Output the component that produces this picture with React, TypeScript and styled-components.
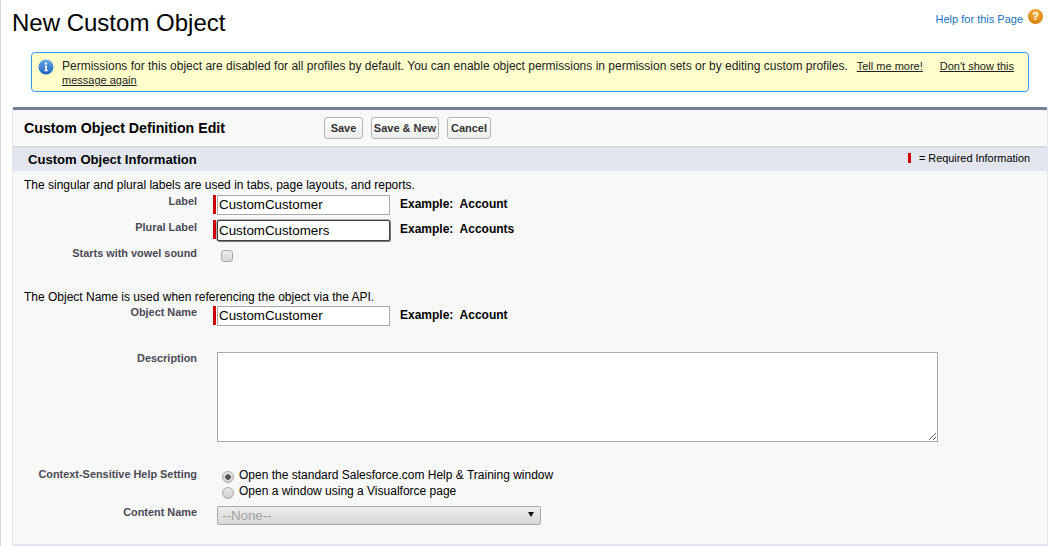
import React from 'react';
import styled, { createGlobalStyle } from 'styled-components';

const GlobalStyle = createGlobalStyle`
  html, body {
    margin: 0;
    padding: 0;
    background: #fff;
  }
  body {
    color: #000;
    font-family: "Liberation Sans", Arial, sans-serif;
    font-size: 12px;
    overflow: hidden;
  }
`;

const App: React.FC = () => (
  <>
    <GlobalStyle />
    <SPage>
      <SHeader>
        <STitle>New Custom Object</STitle>
        <SHelpLink>
          <SHelpText>Help for this Page</SHelpText>
          <SHelpIcon>?</SHelpIcon>
        </SHelpLink>
      </SHeader>

      <SMessage>
        <SInfoIcon>
          <svg width="16" height="16" viewBox="0 0 16 16">
            <defs>
              <linearGradient id="info-blue" x1="0" y1="0" x2="0" y2="1">
                <stop offset="0" stopColor="#6aa9ec" />
                <stop offset="1" stopColor="#1a5fc0" />
              </linearGradient>
            </defs>
            <circle cx="8" cy="8" r="7.5" fill="url(#info-blue)" />
            <circle cx="8" cy="4.6" r="1.2" fill="#fff" />
            <path d="M6.4 6.7h2.6v4.6h1v1H6.3v-1h1V7.7h-.9z" fill="#fff" />
          </svg>
        </SInfoIcon>
        <SMessageText>
          <SMessageLine>
            <span>
              Permissions for this object are disabled for all profiles by default. You can enable object
              permissions in permission sets or by editing custom profiles.
            </span>
            <SMessageLink $gap={9}>Tell me more!</SMessageLink>
            <SMessageLink $gap={17}>Don't show this</SMessageLink>
          </SMessageLine>
          <SMessageLine>
            <SMessageLink $gap={0}>message again</SMessageLink>
          </SMessageLine>
        </SMessageText>
      </SMessage>

      <SPanel>
        <SPanelHeader>
          <SPanelTitle>Custom Object Definition Edit</SPanelTitle>
          <SButtons>
            <SButton $width={39}>Save</SButton>
            <SButton $width={68}>Save &amp; New</SButton>
            <SButton $width={44}>Cancel</SButton>
          </SButtons>
        </SPanelHeader>

        <SSectionBar>
          <SSectionTitle>Custom Object Information</SSectionTitle>
          <SRequiredNote>
            <SRequiredMark />
            = Required Information
          </SRequiredNote>
        </SSectionBar>

        <SIntro $top={7}>The singular and plural labels are used in tabs, page layouts, and reports.</SIntro>

        <SRow $top={3}>
          <SLabel $top={0}>Label</SLabel>
          <SField>
            <SRequiredBar />
            <STextInput defaultValue="CustomCustomer" />
            <SExample>Example:&nbsp; Account</SExample>
          </SField>
        </SRow>

        <SRow $top={5}>
          <SLabel $top={1}>Plural Label</SLabel>
          <SField>
            <SRequiredBar />
            <STextInput defaultValue="CustomCustomers" $focused />
            <SExample>Example:&nbsp; Accounts</SExample>
          </SField>
        </SRow>

        <SRow $top={6}>
          <SLabel $top={0}>Starts with vowel sound</SLabel>
          <SField>
            <SCheckbox type="checkbox" />
          </SField>
        </SRow>

        <SIntro $top={28}>The Object Name is used when referencing the object via the API.</SIntro>

        <SRow $top={2}>
          <SLabel $top={0}>Object Name</SLabel>
          <SField>
            <SRequiredBar />
            <STextInput defaultValue="CustomCustomer" />
            <SExample>Example:&nbsp; Account</SExample>
          </SField>
        </SRow>

        <SRow $top={26}>
          <SLabel $top={0}>Description</SLabel>
          <SField>
            <STextArea />
          </SField>
        </SRow>

        <SRow $top={26}>
          <SLabel $top={0}>Context-Sensitive Help Setting</SLabel>
          <SRadioGroup>
            <SRadioOption>
              <SRadio type="radio" name="help" defaultChecked />
              Open the standard Salesforce.com Help &amp; Training window
            </SRadioOption>
            <SRadioOption>
              <SRadio type="radio" name="help" />
              Open a window using a Visualforce page
            </SRadioOption>
          </SRadioGroup>
        </SRow>

        <SRow $top={7}>
          <SLabel $top={0}>Content Name</SLabel>
          <SField>
            <SSelectWrap>
              <SSelect disabled>
                <option>--None--</option>
              </SSelect>
              <SSelectArrow />
            </SSelectWrap>
          </SField>
        </SRow>
      </SPanel>
    </SPage>
  </>
);

export default App;

const SPage = styled.div`
  height: 546px;
  box-sizing: border-box;
  padding: 0 1px 0 11px;
  border-left: 1px solid #d4d4d4;
`;

const SHeader = styled.div`
  height: 52px;
  display: flex;
  align-items: flex-start;
  justify-content: space-between;
`;

const STitle = styled.h1`
  margin: 8px 0 0;
  font-size: 24px;
  font-weight: 400;
  line-height: 29px;
`;

const SHelpLink = styled.a`
  color: #1b6fc2;
  display: flex;
  margin-top: 9px;
  font-size: 11px;
  line-height: 15px;
  align-items: flex-start;
  margin-right: 5px;
`;

const SHelpText = styled.span`
  padding-top: 3px;
`;

const SHelpIcon = styled.span`
  width: 15px;
  height: 15px;
  color: #fff;
  display: block;
  font-size: 11px;
  font-weight: 700;
  text-align: center;
  line-height: 15px;
  margin-left: 5px;
  border-radius: 50%;
  background: radial-gradient(circle at 50% 30%, #f5b544, #d9810c 75%);
`;

const SMessage = styled.div`
  width: 998px;
  height: 40px;
  display: flex;
  box-sizing: border-box;
  margin-left: 19px;
  padding: 6px 10px 0 6px;
  border: 1px solid #39f;
  border-radius: 4px;
  background-color: #ffc;
`;

const SInfoIcon = styled.span`
  width: 16px;
  height: 16px;
  flex: none;
  margin-right: 8px;
`;

const SMessageText = styled.div`
  color: #222;
  font-size: 12px;
  line-height: 14px;
`;

const SMessageLine = styled.div`
  white-space: nowrap;
`;

const SMessageLink = styled.a<{ $gap: number }>`
  color: #222;
  font-size: 11px;
  margin-left: ${(props) => props.$gap}px;
  text-decoration: underline;
`;

const SPanel = styled.div`
  height: 439px;
  margin-top: 15px;
  box-sizing: border-box;
  border-top: 3px solid #747e96;
  border-left: 1px solid #e3e6ef;
  border-right: 1px solid #e3e6ef;
  border-bottom: 2px solid #e3e6ef;
  border-radius: 3px 3px 0 0;
  background-color: #f8f8f8;
`;

const SPanelHeader = styled.div`
  height: 36px;
  display: flex;
  align-items: center;
  padding-left: 11px;
  border-bottom: 2px solid #dbdbdb;
`;

const SPanelTitle = styled.h2`
  width: 300px;
  margin: 0;
  font-size: 14.2px;
  font-weight: 700;
`;

const SButtons = styled.div`
  display: flex;
  gap: 8px;
`;

const SButton = styled.button<{ $width: number }>`
  color: #333;
  width: ${(props) => props.$width}px;
  height: 22px;
  padding: 0;
  font-size: 11px;
  font-family: inherit;
  font-weight: 700;
  border: 1px solid #b5b5b5;
  border-radius: 3px;
  background: linear-gradient(#fff, #ededed);
`;

const SSectionBar = styled.div`
  height: 23px;
  display: flex;
  align-items: center;
  justify-content: space-between;
  padding: 0 17px 0 15px;
  background-color: #e3e6ef;
`;

const SSectionTitle = styled.h3`
  margin: 0;
  font-size: 13.1px;
  font-weight: 700;
`;

const SRequiredNote = styled.span`
  display: flex;
  font-size: 10.9px;
  align-items: center;
  margin-bottom: 3px;
`;

const SRequiredMark = styled.i`
  width: 3px;
  height: 10px;
  display: block;
  margin-right: 8px;
  background-color: #c00;
`;

const SIntro = styled.p<{ $top: number }>`
  margin: ${(props) => props.$top}px 0 0 11px;
  font-size: 12px;
  line-height: 14px;
`;

const SRow = styled.div<{ $top: number }>`
  display: grid;
  margin-top: ${(props) => props.$top}px;
  grid-template-columns: 184px 1fr;
`;

const SLabel = styled.div<{ $top: number }>`
  color: #4a4a56;
  font-size: 10.9px;
  font-weight: 700;
  text-align: right;
  line-height: 13px;
  padding-top: ${(props) => props.$top}px;
`;

const SField = styled.div`
  display: flex;
  align-items: flex-start;
  padding-left: 16px;
`;

const SRequiredBar = styled.i`
  width: 3px;
  height: 19px;
  flex: none;
  display: block;
  margin-right: 1px;
  background-color: #c00;
`;

const STextInput = styled.input<{ $focused?: boolean }>`
  width: 173px;
  height: ${(props) => (props.$focused ? 21 : 20)}px;
  margin: 0;
  padding: ${(props) => (props.$focused ? '0 1px' : '0 1px 2px')};
  box-sizing: border-box;
  font-size: 13.33px;
  font-family: inherit;
  background-color: #fff;
  border: ${(props) => (props.$focused ? '1px solid #444' : '1px solid #a9a9a9')};
  border-radius: ${(props) => (props.$focused ? '2px' : '0')};
  box-shadow: ${(props) => (props.$focused ? '0 0 0 0.5px #666, 1px 1px 0 #888' : 'none')};
  outline: none;
`;

const SExample = styled.span`
  font-size: 12px;
  font-weight: 700;
  line-height: 16px;
  margin-left: 10px;
  padding-top: 1px;
`;

const SCheckbox = styled.input`
  width: 12px;
  height: 12px;
  margin: 3px 0 0 8px;
  appearance: none;
  border: 1px solid #aaa;
  border-radius: 3px;
  background: linear-gradient(#ececec, #d6d6d6);
`;

const STextArea = styled.textarea`
  width: 721px;
  height: 90px;
  margin: 0 0 0 4px;
  padding: 0;
  display: block;
  box-sizing: border-box;
  border: 1px solid #a9a9a9;
  background-color: #fff;
  outline: none;
  resize: both;
`;

const SRadioGroup = styled.div`
  display: flex;
  margin-top: -1px;
  flex-direction: column;
  padding-left: 24px;
`;

const SRadioOption = styled.label`
  display: flex;
  font-size: 12px;
  line-height: 16px;
  align-items: flex-start;
`;

const SRadio = styled.input`
  width: 12px;
  height: 12px;
  margin: 4px 5px 0 1px;
  appearance: none;
  border: 1px solid #aaa;
  border-radius: 50%;
  background: linear-gradient(#e8e8e8, #cfcfcf);

  &:checked {
    background: radial-gradient(circle, #555 0, #555 2.5px, transparent 3px), linear-gradient(#e8e8e8, #cfcfcf);
  }
`;

const SSelectWrap = styled.div`
  width: 324px;
  height: 19px;
  margin-left: 4px;
  position: relative;
`;

const SSelect = styled.select`
  width: 100%;
  height: 100%;
  margin: 0;
  padding: 0 4px;
  color: #a3a3a3;
  display: block;
  appearance: none;
  font-size: 13.33px;
  font-family: inherit;
  opacity: 1;
  border: 1px solid #a9a9a9;
  border-radius: 2px;
  background: linear-gradient(#ededed, #d8d8d8);
`;

const SSelectArrow = styled.span`
  top: 6px;
  right: 7px;
  width: 0;
  height: 0;
  position: absolute;
  border-top: 5px solid #111;
  border-left: 3px solid transparent;
  border-right: 3px solid transparent;
`;
